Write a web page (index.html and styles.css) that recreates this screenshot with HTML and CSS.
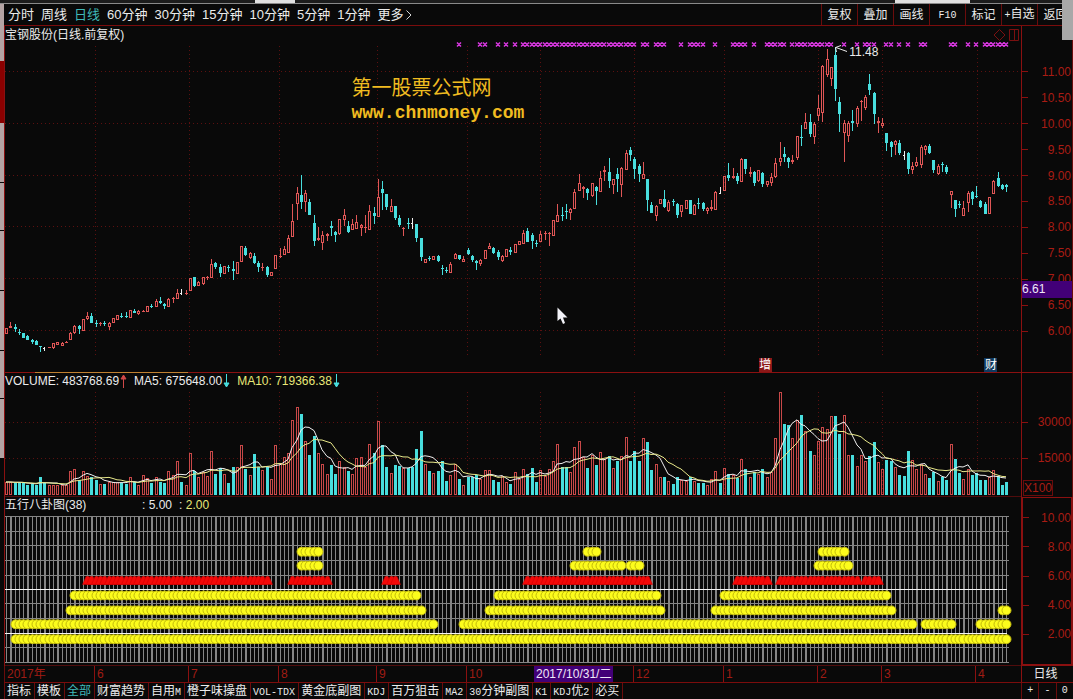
FILE: index.html
```html
<!DOCTYPE html>
<html lang="zh-CN">
<head>
<meta charset="utf-8">
<title>宝钢股份 日线</title>
<link rel="stylesheet" href="styles.css">
</head>
<body>
<div class="app">
  <div class="topstrip"><i class="strip-gap-a"></i><i class="strip-light-a"></i><i class="strip-gap-b"></i><i class="strip-light-b"></i></div>
  <div class="rail"></div>
  <header class="toolbar">
    <nav class="periods">
      <button>分时</button><button>周线</button><button class="active">日线</button><button>60分钟</button><button>30分钟</button><button>15分钟</button><button>10分钟</button><button>5分钟</button><button>1分钟</button><button>更多</button>
      <button class="expand" aria-label="展开"><svg class="chevron" viewBox="0 0 6 10"><path d="M0.5 0.5L5 5L0.5 9.5"/></svg></button>
    </nav>
    <div class="actions">
      <button>复权</button><button>叠加</button><button>画线</button><button><span class="latin">F10</span></button><button>标记</button><button><span class="latin">+</span>自选</button><button>返回</button>
    </div>
    <div class="scroll-thumb"></div>
  </header>

  <section class="panel price">
    <div class="plot">
      <div class="caption">
        <h1>宝钢股份(日线.前复权)</h1>
        <svg class="tools" viewBox="0 0 28 14"><path d="M1 7L6.500 1.500L12 7L6.500 12.500Z"/><path d="M16.500 1.500H25.500V12.500H16.500ZM21.500 1.500V12.500"/></svg>
      </div>
      <svg class="canvas" id="price" viewBox="5 42 1016 330" preserveAspectRatio="none"></svg>
      <div class="brand"><p>第一股票公式网</p><p class="site">www.chnmoney.com</p></div>
      <span class="peak">11.48</span>
      <span class="pin pin-add">增</span>
      <span class="pin pin-fin">财</span>
      <svg class="cursor" viewBox="0 0 11 18"><path d="M0.500 0.500V14L3.500 11.500L6 17L8 16L6 10.500H10.500Z"/></svg>
    </div>
    <div class="axis">
      <span>11.00</span><span>10.50</span><span>10.00</span><span>9.50</span><span>9.00</span><span>8.50</span><span>8.00</span><span>7.50</span><span>7.00</span><span>6.50</span><span>6.00</span>
      <b class="level">6.61</b>
    </div>
  </section>

  <section class="panel volume">
    <div class="plot">
      <div class="caption">
        <span>VOLUME: 483768.69</span><svg class="arrow up" viewBox="0 0 7 14"><path d="M3.500 14V2M1 5H6L3.500 1Z"/></svg>
        <span>MA5: 675648.00</span><svg class="arrow down" viewBox="0 0 7 14"><path d="M3.500 0V12M1 9H6L3.500 13Z"/></svg>
        <span class="yellow">MA10: 719366.38</span><svg class="arrow down" viewBox="0 0 7 14"><path d="M3.500 0V12M1 9H6L3.500 13Z"/></svg>
      </div>
      <svg class="canvas" id="volume" viewBox="5 389 1016 107" preserveAspectRatio="none"></svg>
    </div>
    <div class="axis"><span>30000</span><span>15000</span><em>X100</em></div>
  </section>

  <section class="panel bagua">
    <div class="plot">
      <div class="caption"><h2>五行八卦图(38)</h2><span>: 5.00</span><span class="yellow"><i>:</i> 2.00</span></div>
      <svg class="canvas" id="bagua" viewBox="5 513 1016 153" preserveAspectRatio="none"></svg>
    </div>
    <div class="axis"><span>10.00</span><span>8.00</span><span>6.00</span><span>4.00</span><span>2.00</span></div>
  </section>

  <div class="dates">
    <div class="timeline" id="timeline"></div>
    <div class="period">日线</div>
  </div>

  <footer class="tabs">
    <nav>
      <button>指标</button><button>模板</button><button class="active">全部</button><button>财富趋势</button><button>自用<span class="latin">M</span></button><button>橙子味操盘</button><button><span class="latin">VOL-TDX</span></button><button>黄金底副图</button><button><span class="latin">KDJ</span></button><button>百万狙击</button><button><span class="latin">MA2</span></button><button><span class="latin">30</span>分钟副图</button><button><span class="latin">K1</span></button><button><span class="latin">KDJ</span>优<span class="latin">2</span></button><button>必买</button>
    </nav>
    <div class="zoom"><button>+</button><button>-</button><button>0</button></div>
  </footer>
</div>
<script src="chart.js"></script>
</body>
</html>
```

FILE: styles.css
```css
* { box-sizing: border-box; }
body {
  margin: 0;
  background: #090909;
  color: #ececec;
  font: 12px/16px "Liberation Sans", "Noto Sans CJK SC", sans-serif;
}
h1, h2, p { margin: 0; font-size: inherit; font-weight: normal; }
i, em { font-style: normal; }
button {
  margin: 0;
  padding: 0;
  border: 0;
  background: none;
  color: inherit;
  font: inherit;
  white-space: nowrap;
}
.active { color: #40b8b8; }
.yellow { color: #e8e878; }
.yellow i { color: #ececec; }
.latin { font: 10px/16px "Liberation Mono", monospace; }

.app {
  display: grid;
  grid-template-columns: 4px minmax(0, 1fr);
  grid-template-rows: 4px 22px minmax(0, 347fr) minmax(0, 124fr) minmax(0, 169fr) 16px 17px;
  height: 100vh;
  min-height: 480px;
  overflow: hidden;
}
.topstrip {
  grid-column: 1 / -1;
  display: flex;
  background: #1c1c1c;
  border-bottom: 1px solid #8a8a8a;
}
.strip-gap-a { flex: 255; }
.strip-light-a { flex: 40; background: #e0e0e0; }
.strip-gap-b { flex: 600; }
.strip-light-b { flex: 75; background: #e0e0e0; margin-right: 103px; }
.rail {
  grid-row: 2 / -1;
  background: linear-gradient(#b4a4a4 57px, #8a0000 57px 119px, #b4a4a4 119px 178px, #080808 178px 179px, #b4a4a4 179px 226px, #080808 226px 227px, #b4a4a4 227px 286px, #080808 286px 287px, #b4a4a4 287px 346px, #080808 346px 347px, #b4a4a4 347px 394px, #080808 394px 395px, #b4a4a4 395px 454px, #080808 454px);
}
.toolbar {
  position: relative;
  display: flex;
  justify-content: space-between;
  border-bottom: 1px solid #7a0c0c;
}
.periods {
  display: flex;
  align-items: center;
  gap: 7px;
  padding-left: 4px;
  font-size: 13px;
}
.periods .expand { margin-left: -4px; }
.chevron { display: block; width: 6px; height: 10px; }
.chevron path { fill: none; stroke: #d8d8d8; }
.actions { display: flex; overflow: hidden; }
.actions button { width: 36px; border-left: 1px solid #6a0c0c; }
.scroll-thumb {
  position: absolute;
  right: 0;
  top: -4px;
  width: 11px;
  height: 40px;
  background: #a8a8a8;
  z-index: 2;
}

.panel {
  display: grid;
  grid-column: 2;
  grid-template-columns: minmax(0, 1fr) 52px;
  border-left: 1px solid #8a1010;
}
.plot {
  position: relative;
  display: flex;
  flex-direction: column;
  min-height: 0;
  border-bottom: 1px solid #8a1010;
}
.price .plot::after {
  content: "";
  position: absolute;
  left: 3%;
  bottom: -1px;
  width: 15%;
  height: 1px;
  background: #c08030;
}
.caption { display: flex; height: 16px; line-height: 18px; white-space: nowrap; }
.price .caption { justify-content: space-between; }
.volume .caption { line-height: 16px; }
.bagua .caption { line-height: 16px; gap: 7px; }
.bagua h2 { width: 130px; }
.volume .plot, .bagua .plot { border-bottom-color: #500c0c; }
.canvas { display: block; width: 100%; flex: 1; min-height: 0; }
.tools { width: 28px; height: 14px; margin-top: 2px; }
.tools path { fill: none; stroke: #7a1010; }
.arrow { width: 7px; height: 14px; margin: 1px 7px 0 1px; }
.arrow.up path { fill: #d04848; stroke: #d04848; }
.arrow.down path { fill: #48dede; stroke: #48dede; }
.brand {
  position: absolute;
  left: 34.1%;
  top: 14%;
  color: #f0bc20;
  font: bold 20px/26px "Noto Sans CJK SC", sans-serif;
}
.brand .site { font: bold 18px/26px "Liberation Mono", monospace; }
.peak { position: absolute; left: 83.1%; top: 5.2%; }
.pin { position: absolute; bottom: 0; width: 13px; height: 14px; line-height: 14px; text-align: center; color: #fff; }
.pin-add { left: 74.2%; background: #8c1818; }
.pin-fin { left: 96.4%; background: #103a60; }
.cursor { position: absolute; left: 54.3%; top: 81.2%; width: 11px; height: 18px; }
.cursor path { fill: #f2f2f8; }

.axis {
  position: relative;
  display: flex;
  flex-direction: column;
  color: #a81c14;
  border-left: 1px solid #8a1010;
  border-right: 1px solid #6a0c0c;
}
.axis span { display: flex; flex: 1; align-items: center; justify-content: space-between; }
.axis span::before { content: ""; width: 6px; height: 1px; background: #8a1010; }
.price .axis { padding: 33px 1px 28px 0; border-bottom: 1px solid #8a1010; }
.level {
  position: absolute;
  left: 0;
  right: 0;
  top: 73.8%;
  height: 17px;
  background: #420078;
  color: #f0e8f8;
  font-weight: normal;
}
.volume .axis { padding: 31px 1px 1px 0; }
.volume .axis span { flex: 0 0 36px; }
.volume em { align-self: flex-start; margin: 4px 0 0 1px; border: 1px solid #6a0c0c; line-height: 14px; }
.bagua .axis { padding: 5px 0 15px; border: 2px solid #8a1010; border-width: 1px 2px 2px; }

.dates, .tabs { grid-column: 2; display: flex; border-left: 1px solid #6a0c0c; min-width: 0; }
.timeline { position: relative; flex: 1; color: #a01c14; }
.timeline span { position: absolute; top: 0; padding-left: 2px; border-left: 1px solid #8a1010; }
.timeline .first { padding: 0; border-left: 0; }
.timeline .picked {
  padding: 0 2px;
  border: 0;
  background: #420078;
  color: #f0e8f8;
}
.period { width: 52px; border-left: 1px solid #8a1010; text-align: center; padding-right: 4px; }
.tabs { justify-content: space-between; border-top: 1px solid #7a0c0c; }
.tabs nav { display: flex; }
.tabs nav button { padding: 0 3px 0 2px; border-right: 1px solid #6a0c0c; }
.zoom { display: flex; width: 52px; font: 10px/16px "Liberation Mono", monospace; }
.zoom button { flex: 1; border-left: 1px solid #6a0c0c; }

.grid { fill: none; stroke: #5c1010; stroke-dasharray: 1 3; shape-rendering: crispEdges; }
.rise { fill: none; stroke: #e05656; shape-rendering: crispEdges; }
.volume .rise { stroke: #c84848; }
.fall { fill: #48dede; stroke: none; shape-rendering: crispEdges; }
.even { fill: #f0f0f0; shape-rendering: crispEdges; }
.cross { fill: none; stroke: #d838e0; stroke-width: 1.5px; }
.pointer { fill: none; stroke: #ececec; }
.ma5 { fill: none; stroke: #f0f0f0; }
.ma10 { fill: none; stroke: #e8e88a; }
.mesh { fill: #858585; shape-rendering: crispEdges; }
.base { fill: #f4f4f4; shape-rendering: crispEdges; }
.disc { fill: #fcfc1c; stroke: #c0b80c; }
.peakmark { fill: #f40808; stroke: #c80000; stroke-width: 0.5px; }
```

FILE: chart.js
```js
// One entry per trading day: kind (r rise, c fall, w unchanged), high, body top, body bottom, low.
const days = `
r328,328,334,334 r322,326,328,328 c324,327,329,332 c329,332,333,335 c333,333,338,338 c335,336,340,340 c339,340,342,344 c340,341,345,345 c346,346,347,352 w347,348,349,351
r347,347,348,348 r343,343,348,349 r342,342,345,345 r342,343,346,346 r341,342,343,343 r332,333,340,340 r325,326,333,334 c325,326,329,334 r319,319,331,331 r312,316,319,320
c313,316,323,323 c320,323,324,327 r322,323,324,326 c321,323,324,326 r322,323,327,330 r318,318,323,323 r315,315,320,320 c313,316,317,318 c312,316,317,318 r310,310,318,318
c309,311,313,313 r310,311,314,315 r310,311,312,312 r306,306,312,312 c304,306,307,308 r299,301,307,307 c297,301,303,304 c303,304,306,309 r298,299,307,307 r297,298,299,303
r289,293,299,299 w289,293,294,295 r290,293,294,295 r278,278,291,291 c277,277,286,287 r281,282,286,286 r277,277,284,285 r276,277,278,280 r259,264,278,278 c262,263,267,269
c264,267,273,277 r266,266,274,274 c265,267,268,272 c261,269,271,280 r262,262,274,274 r246,246,262,262 c246,248,255,256 r252,253,258,259 c253,256,263,264 c261,263,267,272
r263,267,268,271 c266,267,275,277 r272,272,276,276 r255,255,269,269 r248,256,257,258 r246,249,255,255 r235,238,253,253 r204,221,237,237 r187,193,204,220 c175,195,202,209
r190,193,202,212 c199,202,215,215 c215,223,241,246 r227,238,240,241 r231,235,243,250 r233,234,236,241 c221,226,228,236 c231,232,235,242 r219,219,234,235 r209,215,220,226
c221,226,232,233 r219,224,230,230 r215,222,229,229 r224,225,228,236 r215,227,228,233 r205,211,230,230 c207,213,216,224 r179,197,217,217 c181,189,193,210 c194,194,207,210
r199,206,212,212 c206,206,218,220 c215,218,225,227 r227,228,229,236 c218,223,224,229 w218,223,224,229 c224,224,238,242 c238,238,257,261 r259,259,263,263 c256,258,259,261
r256,256,260,260 c255,256,261,262 c265,268,269,275 c267,270,271,273 r262,264,273,273 r253,254,259,259 c255,255,259,260 r256,259,262,262 c248,250,254,255 c255,256,260,262
c260,261,263,270 r259,260,264,266 r250,250,259,259 r243,246,249,249 c247,248,253,254 c250,252,257,260 r255,256,261,262 r249,249,257,257 c247,250,252,255 r244,244,253,253
r241,241,245,245 r230,233,244,244 c228,231,242,242 c233,235,241,249 c240,243,244,247 r231,234,242,242 r231,233,234,240 r232,233,234,246 r220,220,236,236 r204,215,222,222
c207,215,216,221 c204,211,212,219 r208,209,213,220 r189,192,209,209 r174,183,191,191 r186,187,189,198 c188,189,193,200 r183,183,196,197 c186,187,191,205 r171,178,192,192
r166,170,172,181 c158,172,181,188 r179,179,185,194 c168,174,179,192 r167,168,185,197 r150,153,170,170 c147,150,155,161 c157,159,169,179 c164,166,174,182 r162,174,179,179
c179,179,200,211 c202,205,213,213 r205,206,216,221 r199,199,204,204 c190,199,207,208 r200,202,211,212 c199,201,202,206 c203,204,215,218 r205,205,212,217 r200,200,209,209
c200,200,214,214 r204,205,215,215 c198,203,204,209 c202,203,209,211 r207,208,211,214 r200,207,209,211 r191,192,210,210 w187,193,193,194 r176,176,191,191 c163,175,178,181
r168,176,178,179 c173,176,181,184 r158,159,182,182 c159,159,169,174 r167,172,174,177 c171,172,183,186 r170,170,181,182 c172,173,184,187 r181,181,185,187 r173,177,183,186
r158,163,177,178 r142,158,162,166 c147,154,157,162 c157,158,162,168 r155,160,162,164 r136,136,158,160 c125,137,138,146 r113,122,129,129 c114,122,134,137 r122,124,137,144
r95,108,116,121 r65,66,113,122 r49,59,75,77 r67,67,79,86 c47,55,89,101 c97,102,114,132 r120,123,133,162 r121,123,136,142 c110,121,123,131 r106,108,124,127
r100,101,102,121 r95,97,108,110 c74,84,90,95 c92,93,114,124 r117,121,123,133 r118,123,126,128 c133,133,143,151 c141,142,147,157 r140,141,145,155 c140,143,153,155
w151,155,156,160 c152,153,169,174 r162,166,170,174 r157,162,166,167 r145,147,165,168 r145,146,150,155 c144,146,153,154 c160,160,170,173 r164,166,174,175 c162,164,165,172
c165,167,172,174 r191,191,195,208 c200,200,209,217 c201,204,205,208 r201,208,216,216 r191,193,203,212 c191,192,199,205 c186,196,197,198 c200,201,207,208 c202,204,214,214
r197,197,214,214 r180,181,194,194 c172,178,186,187 c184,185,189,190 c184,185,187,192`.trim().split(/\s+/).map(s => [s[0], ...s.slice(1).split(',').map(Number)]);

const volumes = [
13,13,12,13,12,10,11,10,18,12, 10,10,10,10,10,24,26,15,24,19, 18,15,11,11,13,13,13,12,11,18,
13,10,20,17,12,18,13,12,24,20, 34,13,10,42,24,18,23,19,44,21, 27,21,12,28,28,50,26,20,41,28,
25,28,16,50,32,38,42,75,88,81, 54,40,59,42,31,21,30,21,34,28, 24,21,37,38,28,51,42,74,50,28,
22,30,29,27,27,28,46,64,31,24, 22,24,34,14,20,31,16,10,18,18, 20,16,25,25,15,13,19,13,11,23,
16,26,21,27,13,25,19,26,34,51, 28,28,23,48,54,38,27,40,30,43, 36,39,27,34,39,58,34,44,34,57,
53,25,31,18,18,14,11,18,15,14, 18,14,12,12,10,16,24,12,27,21, 20,17,36,26,18,23,21,26,18,23,
57,103,71,70,57,75,80,64,44,40, 54,68,66,79,79,61,80,40,40,29, 40,34,39,53,33,26,35,34,28,20,
19,44,35,26,31,21,17,23,14,18, 15,51,36,22,16,26,20,22,15,15, 18,25,19,10,13];

const NS = 'http://www.w3.org/2000/svg';
const pos = i => Math.round(6 + i * 4.274);

function add(parent, tag, attrs) {
  const el = document.createElementNS(NS, tag);
  for (const key in attrs) el.setAttribute(key, attrs[key]);
  parent.appendChild(el);
}
const box = (x, y, w, h) => `M${x} ${y}h${w}v${h}h${-w}z`;

const months = [95, 189, 279, 377, 467, 540, 634, 724, 818, 882, 977];
function gridPath(rows, top, bottom) {
  return rows.map(y => `M5 ${y + 0.5}H1021`).join('') + months.map(x => `M${x + 0.5} ${top}V${bottom}`).join('');
}

const price = document.getElementById('price');
add(price, 'path', { class: 'grid', d: gridPath([71, 123, 175, 226, 278, 330], 46, 355) });
const marks = [[106,106],[111,112],[115,115],[117,117],[119,119],[121,147],[149,150],[152,154],[158,158],[160,163],[166,166],[170,173],[175,175],[178,182],[184,193],[196,196],[199,199],[201,203],[206,207],[209,209],[211,211],[214,215],[221,222],[225,225],[227,227],[229,234]];
let crosses = '';
for (const [a, b] of marks) for (let i = a; i <= b; i++) crosses += `M${pos(i) - 2} 42.500l4 4m0 -4l-4 4`;
add(price, 'path', { class: 'cross', d: crosses });

let rise = '', fall = '', even = '';
days.forEach(([kind, high, top, bottom, low], i) => {
  const x = pos(i);
  const wick = box(x, high, 1, low - high);
  if (kind === 'r') {
    rise += `M${x + 0.5} ${high}V${top}M${x + 0.5} ${bottom}V${low}`;
    rise += bottom - top < 2 ? `M${x - 1} ${top + 0.5}h3` : box(x - 0.5, top + 0.5, 2, bottom - top - 1);
    if (bottom - top < 3) rise += `M${x + 0.5} ${high}V${low}`;
  } else if (kind === 'c') {
    fall += wick + box(x - 1, top, 3, Math.max(1, bottom - top));
  } else {
    even += wick + box(x - 1, top, 2, 1);
  }
});
add(price, 'path', { class: 'rise', d: rise });
add(price, 'path', { class: 'fall', d: fall });
add(price, 'path', { class: 'even', d: even });
add(price, 'path', { class: 'pointer', d: 'M847 51.500L836 47.500M841 45.500L835.500 47.500L836.500 52' });

const volume = document.getElementById('volume');
add(volume, 'path', { class: 'grid', d: gridPath([422, 458], 392, 495) });
let up = '', down = '';
volumes.forEach((v, i) => {
  const x = pos(i);
  if (days[i][0] === 'r') up += box(x - 0.5, 495 - v + 0.5, 2, v - 1);
  else down += box(x - 1, 495 - v, 3, v);
});
add(volume, 'path', { class: 'rise', d: up });
add(volume, 'path', { class: 'fall', d: down });
function average(n) {
  return volumes.map((_, i) => {
    const part = volumes.slice(Math.max(0, i - n + 1), i + 1);
    return `${pos(i)},${(495 - part.reduce((a, b) => a + b) / part.length).toFixed(1)}`;
  }).join(' ');
}
add(volume, 'polyline', { class: 'ma5', points: average(5) });
add(volume, 'polyline', { class: 'ma10', points: average(10) });

const bagua = document.getElementById('bagua');
let mesh = '';
for (let i = 0; i < 235; i++) mesh += box(pos(i), 516, pos(i + 1) - pos(i) === 5 ? 2 : 1, 148);
for (const y of [516, 531, 545, 560, 575, 604, 619, 648, 663]) mesh += box(5, y, 1004, 1);
add(bagua, 'path', { class: 'mesh', d: mesh });
add(bagua, 'path', { class: 'base', d: box(5, 590, 1002, 1) + box(5, 634, 1002, 1) });
const rows = [
  [552, [[69,73],[136,138],[191,196]]],
  [566, [[69,73],[133,144],[146,148],[190,197]]],
  [596, [[16,96],[115,152],[168,206]]],
  [611, [[15,97],[113,153],[166,207],[233,234]]],
  [625, [[2,100],[107,212],[215,221],[228,234]]],
  [640, [[2,234]]]
];
for (const [y, spans] of rows)
  for (const [a, b] of spans)
    for (let i = a; i <= b; i++) add(bagua, 'circle', { class: 'disc', cx: pos(i) + 0.5, cy: y, r: 4.5 });
for (const [a, b] of [[19,61],[67,75],[89,91],[122,150],[171,178],[181,199],[201,204]])
  for (let i = a; i <= b; i++) add(bagua, 'path', { class: 'peakmark', d: `M${pos(i) - 1} 577h3l3.500 8h-10z` });

const timeline = document.getElementById('timeline');
const stamps = [[7,'2017年','first'],[94,'6'],[188,'7'],[278,'8'],[376,'9'],[466,'10'],[633,'12'],[723,'1'],[817,'2'],[881,'3'],[975,'4'],[534,'2017/10/31/二','picked']];
for (const [x, text, name] of stamps) {
  const el = document.createElement('span');
  el.textContent = text;
  if (name) el.className = name;
  el.style.left = (x - 5) / 10.16 + '%';
  timeline.appendChild(el);
}
```
